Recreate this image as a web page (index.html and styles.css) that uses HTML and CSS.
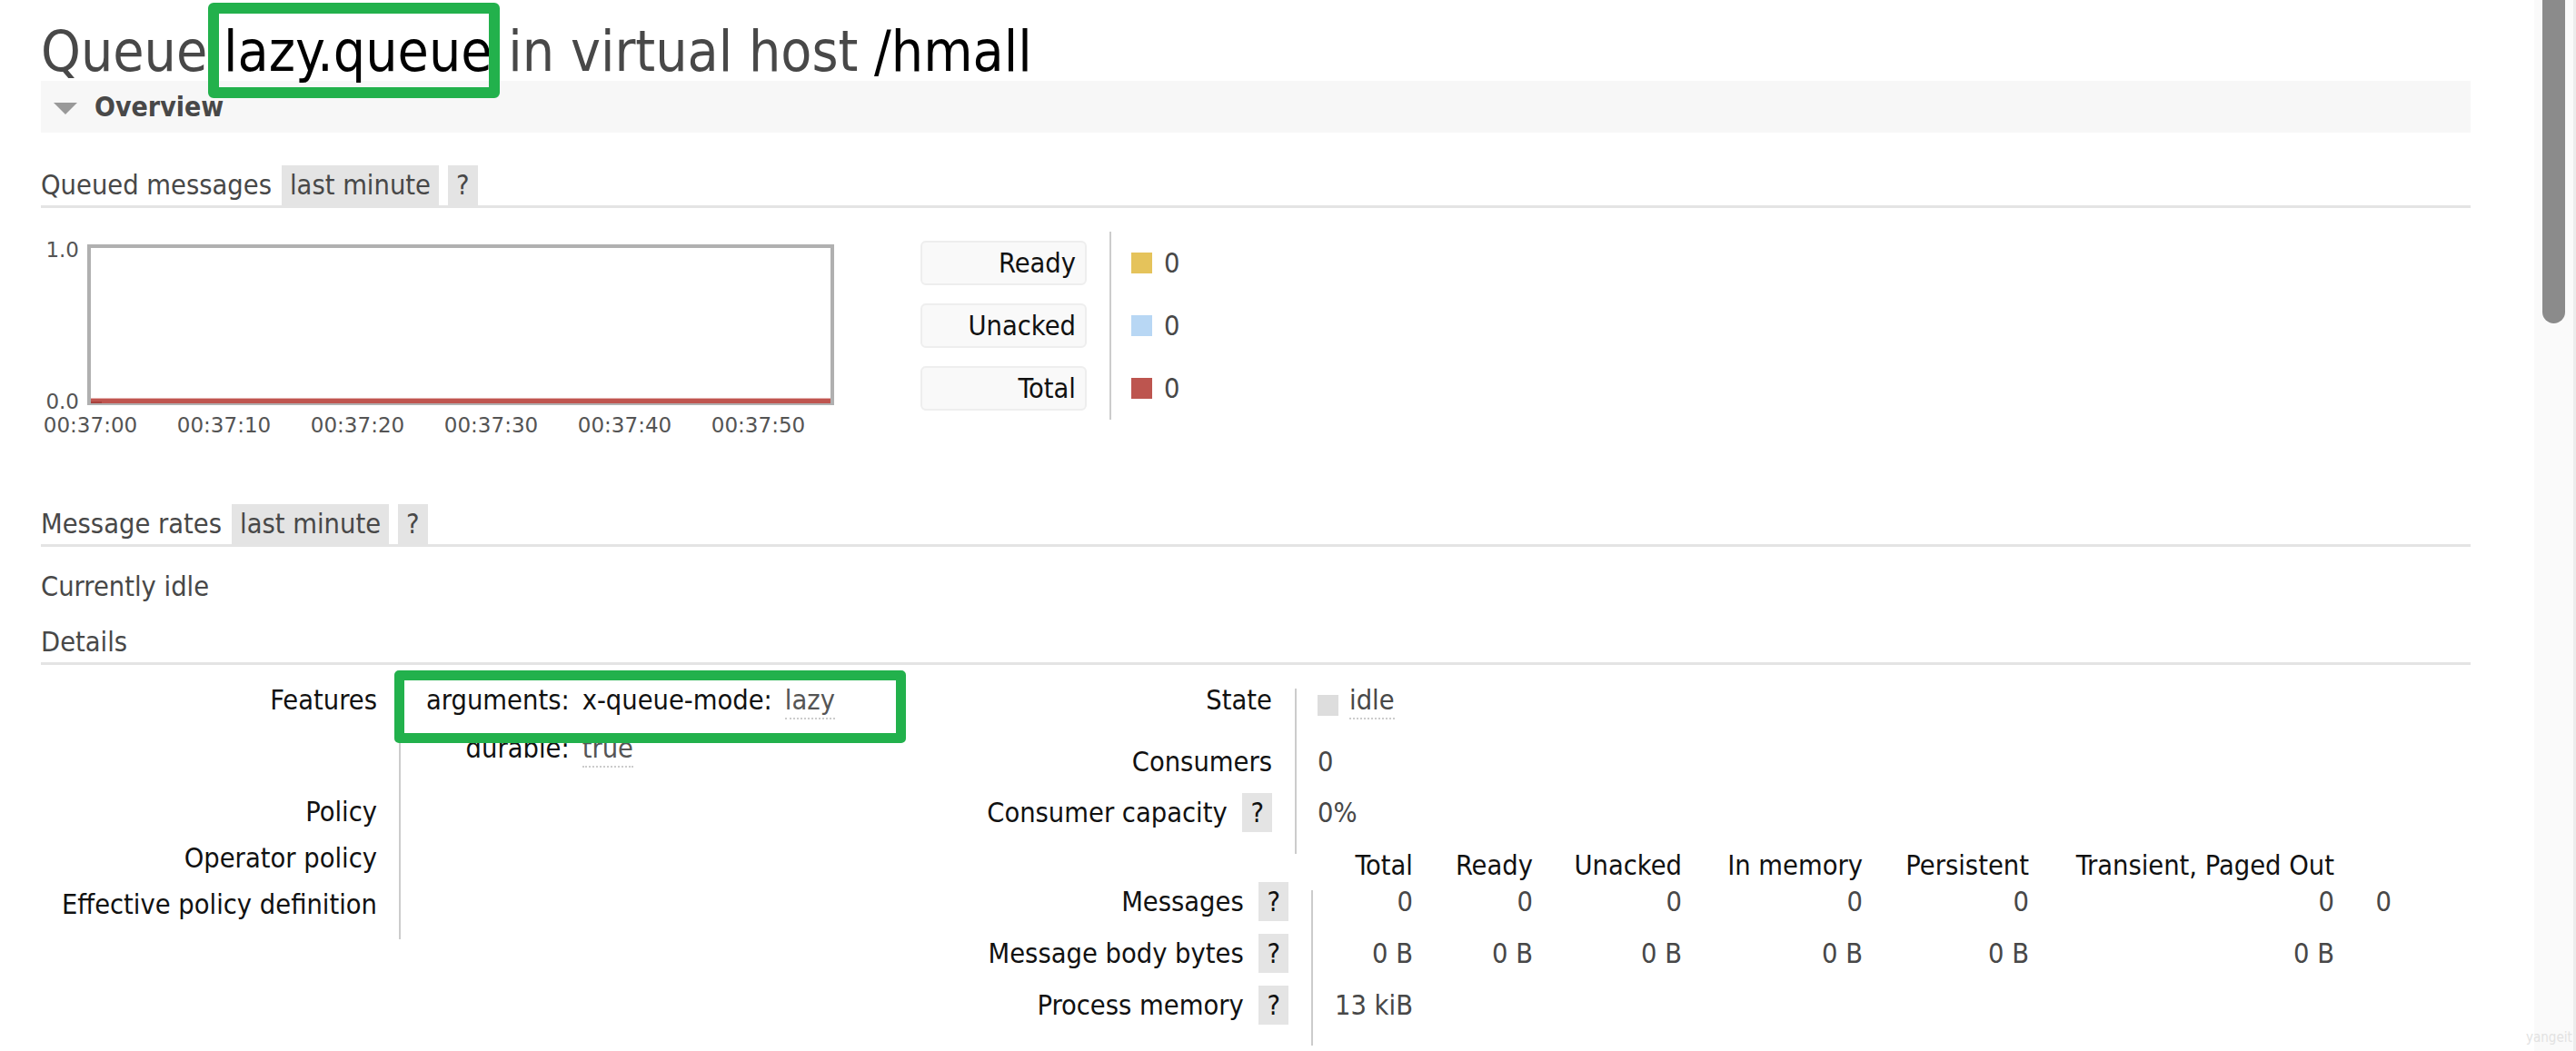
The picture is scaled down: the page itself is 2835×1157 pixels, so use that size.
FILE: index.html
```html
<!DOCTYPE html>
<html>
<head>
  <meta charset="UTF-8">
  <title>Queue lazy.queue</title>
  <link rel="stylesheet" href="styles.css">
</head>
<body>
  <div class="page">
    <h1 class="title">Queue <span class="hl">lazy.queue</span> in virtual host <span class="dark">/hmall</span></h1>

    <h2 class="section-head"><span class="tri"></span>Overview</h2>

    <h3 class="subhead">Queued messages <span class="tag">last minute</span><span class="help">?</span></h3>
    <div class="qrow">
      <div class="chart">
        <div class="yaxis"><span>1.0</span><span>0.0</span></div>
        <svg class="plot" width="822" height="177" viewBox="0 0 822 177">
          <rect x="2" y="2" width="818" height="173" fill="#fff" stroke="#b0b0b0" stroke-width="4"/>
          <rect x="4" y="169" width="814" height="1" fill="#e6b3b1"/>
          <rect x="4" y="170" width="814" height="5" fill="#bf554f"/>
          <rect x="4" y="173" width="12" height="2" fill="#a8413c"/>
        </svg>
        <div class="xaxis">
          <span>00:37:00</span><span>00:37:10</span><span>00:37:20</span>
          <span>00:37:30</span><span>00:37:40</span><span>00:37:50</span>
        </div>
      </div>
      <div class="legend">
        <div class="key">Ready</div><div class="val"><i class="sw ready"></i>0</div>
        <div class="key">Unacked</div><div class="val"><i class="sw unacked"></i>0</div>
        <div class="key">Total</div><div class="val"><i class="sw total"></i>0</div>
      </div>
    </div>

    <h3 class="subhead rates">Message rates <span class="tag">last minute</span><span class="help">?</span></h3>
    <p class="idle">Currently idle</p>

    <h3 class="subhead plain">Details</h3>
    <div class="details">
      <table class="facts left">
        <tr class="feat">
          <th class="k">Features</th>
          <td class="v marked">
            <span class="mark"></span>
            <table class="mini">
              <tr class="gap">
                <th>arguments:</th>
                <td>
                  <table class="mini">
                    <tr><th>x-queue-mode:</th><td><span class="abbr">lazy</span></td></tr>
                  </table>
                </td>
              </tr>
              <tr><th>durable:</th><td><span class="abbr">true</span></td></tr>
            </table>
          </td>
        </tr>
        <tr><th class="k">Policy</th><td class="v"></td></tr>
        <tr><th class="k">Operator policy</th><td class="v"></td></tr>
        <tr><th class="k">Effective policy definition</th><td class="v"></td></tr>
      </table>

      <div class="right-col">
        <table class="facts state">
          <tr class="r-state"><th class="k">State</th><td class="v"><i class="dot"></i><span class="abbr">idle</span></td></tr>
          <tr class="r-cons"><th class="k">Consumers</th><td class="v">0</td></tr>
          <tr class="r-cap"><th class="k">Consumer capacity <span class="help in">?</span></th><td class="v">0%</td></tr>
        </table>

        <table class="msgs">
          <thead>
            <tr>
              <th class="k"></th>
              <th class="c1">Total</th>
              <th class="c2">Ready</th>
              <th class="c3">Unacked</th>
              <th class="c4">In memory</th>
              <th class="c5">Persistent</th>
              <th class="c6">Transient, Paged Out</th>
              <th class="c7"></th>
            </tr>
          </thead>
          <tbody>
            <tr>
              <th class="k">Messages <span class="help in">?</span></th>
              <td class="first">0</td><td>0</td><td>0</td><td>0</td><td>0</td><td>0</td><td>0</td>
            </tr>
            <tr>
              <th class="k">Message body bytes <span class="help in">?</span></th>
              <td class="first">0 B</td><td>0 B</td><td>0 B</td><td>0 B</td><td>0 B</td><td>0 B</td><td></td>
            </tr>
            <tr>
              <th class="k">Process memory <span class="help in">?</span></th>
              <td class="first">13 kiB</td><td></td><td></td><td></td><td></td><td></td><td></td>
            </tr>
          </tbody>
        </table>
      </div>
    </div>
  </div>

  <div class="scrollbar">
    <div class="thumb"></div>
    <span class="wm">yangeit</span>
  </div>
</body>
</html>
```

FILE: styles.css
```css
body {
  margin: 0;
  height: 1157px;
  overflow: hidden;
  display: flex;
  background: #fff;
  color: #484848;
  font-family: "DejaVu Sans Condensed", "DejaVu Sans", sans-serif;
  font-stretch: condensed;
  font-size: 30.5px;
}
.page { flex: 1; padding: 0 70px 0 45px; }

/* title */
.title { margin: 24px 0 0; font-size: 62px; line-height: 65px; font-weight: normal; color: #484848; }
.title .hl { position: relative; color: #000; }
.title .hl::after {
  content: "";
  position: absolute;
  left: -17px; right: -8px; top: -17px; bottom: -15px;
  border: 12px solid #22b14c;
  border-radius: 6px;
}
.title .dark { color: #000; }

/* overview bar */
.section-head {
  margin: 0;
  height: 57px;
  display: flex;
  align-items: center;
  padding-left: 14px;
  background: #f7f7f7;
  font-size: 30px;
  line-height: 57px;
  font-weight: bold;
  color: #484848;
}
.tri {
  width: 0; height: 0;
  border-left: 13px solid transparent;
  border-right: 13px solid transparent;
  border-top: 13px solid #999;
  margin: 4px 19px 0 0;
}

/* sub headings */
.subhead {
  display: flex;
  margin: 36px 0 0;
  font-size: 30.5px;
  line-height: 44px;
  font-weight: normal;
  border-bottom: 3px solid #e4e4e4;
}
.tag, .help { background: #e4e4e4; padding: 0 9px; }
.tag { margin-left: 11px; }
.help { margin-left: 10px; }
.subhead.rates { margin-top: 73px; }
.subhead.plain { margin-top: 26px; line-height: 35px; padding-bottom: 5px; }
.idle { margin: 26px 0 0; line-height: 35px; }

/* chart + legend */
.qrow { display: flex; align-items: flex-start; margin-top: 26px; }
.chart {
  display: grid;
  grid-template-columns: 51px 822px;
  grid-template-rows: 177px auto;
  margin-top: 14px;
  font-family: "DejaVu Sans", sans-serif;
  font-stretch: normal;
  font-size: 23px;
  color: #545454;
}
.yaxis {
  grid-column: 1; grid-row: 1;
  height: 190px;
  margin-top: -5px;
  padding-right: 9px;
  display: flex;
  flex-direction: column;
  justify-content: space-between;
  align-items: flex-end;
  line-height: 23px;
}
.plot { grid-column: 2; grid-row: 1; display: block; }
.xaxis {
  grid-column: 1 / 3; grid-row: 2;
  display: flex;
  margin: 9px 0 0 -19px;
  line-height: 27px;
}
.xaxis span { width: 147px; text-align: center; flex: none; }

.legend {
  display: grid;
  grid-template-columns: 183px auto;
  column-gap: 25px;
  margin-left: 95px;
}
.key {
  height: 49px;
  margin: 10px 0;
  box-sizing: border-box;
  border: 2px solid #eee;
  border-radius: 6px;
  background: #f9f9f9;
  text-align: right;
  padding-right: 10px;
  line-height: 45px;
  color: #111;
}
.val {
  border-left: 2px solid #ccc;
  padding-left: 22px;
  display: flex;
  align-items: center;
  gap: 13px;
  width: 60px;
}
.sw { display: block; width: 23px; height: 23px; }
.sw.ready { background: #e5c35b; }
.sw.unacked { background: #b8d7f4; }
.sw.total { background: #bd554f; }

/* details */
.details { display: flex; align-items: flex-start; margin-top: 26px; }
.details table { border-collapse: separate; border-spacing: 0; font-size: 30.5px; line-height: 26px; }
.details th, .details td { padding: 0; vertical-align: top; font-weight: normal; white-space: nowrap; }

.facts .k { text-align: right; color: #111; padding: 0 24px 25px 0; }
.facts .v { border-left: 2px solid #ccc; padding: 0 0 25px 28px; color: #484848; }
.left { width: 985px; }
.left .k { width: 370px; }
.left .v { width: 561px; }
.left .feat > .k, .left .feat > .v { padding-bottom: 44px; }
.v.marked { position: relative; }
.mark {
  position: absolute;
  left: -7px; top: -20px;
  width: 563px; height: 80px;
  box-sizing: border-box;
  border: 11px solid #22b14c;
  border-radius: 5px;
}

.mini th { text-align: right; color: #111; padding-right: 14px; }
.mini td { color: #555; }
.mini .gap > th, .mini .gap > td { padding-bottom: 27px; }
.abbr { border-bottom: 2px dotted #ccc; padding-bottom: 2px; }

.state .k { width: 370px; padding-right: 25px; }
.state .v { padding-left: 23px; }
.state .r-state > * { padding-bottom: 38px; }
.state .r-cons > * { padding-bottom: 30px; }
.state .r-cap > * { padding-bottom: 32px; }
.dot { display: inline-block; width: 23px; height: 23px; background: #ddd; vertical-align: -7px; margin-right: 12px; }

.help.in { display: inline-block; line-height: 43px; margin: -10px 0 -10px 8px; }

.msgs .k { width: 388px; padding-right: 25px; text-align: right; color: #111; }
.msgs thead th { padding-bottom: 14px; text-align: right; color: #111; box-sizing: border-box; }
.msgs tbody th.k { padding-bottom: 31px; }
.msgs tbody td { padding-bottom: 31px; text-align: right; color: #484848; }
.msgs td.first { border-left: 2px solid #ccc; padding-left: 24px; }
.msgs .c1 { width: 111px; }
.msgs .c2 { width: 132px; }
.msgs .c3 { width: 164px; }
.msgs .c4 { width: 199px; }
.msgs .c5 { width: 183px; }
.msgs .c6 { width: 336px; }
.msgs .c7 { width: 63px; }

/* scrollbar */
.scrollbar {
  position: relative;
  width: 46px;
  flex: none;
  box-sizing: border-box;
  background: #fafafa;
  border-right: 3px solid #ececec;
}
.thumb { margin-left: 9px; width: 25px; height: 356px; background: #8b8b8b; border-radius: 0 0 13px 13px; }
.wm { position: absolute; left: -9px; bottom: 6px; font-size: 15px; color: #e2e2e2; font-family: "DejaVu Sans", sans-serif; }
```
